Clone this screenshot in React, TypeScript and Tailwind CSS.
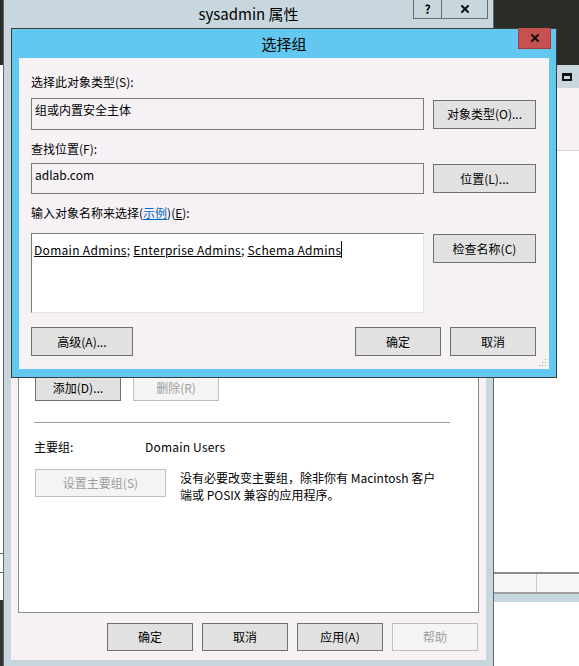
import React from "react";

const FONT = "font-['Noto_Sans_CJK_SC','Noto_Sans',sans-serif]";

function Btn({
  children,
  className = "",
  disabled = false,
}: {
  children: React.ReactNode;
  className?: string;
  disabled?: boolean;
}) {
  return (
    <button
      className={`flex shrink-0 items-center justify-center border text-[12px] leading-[16px] ${
        disabled ? "border-[#bfbfbf] bg-[#f4f4f4] text-[#9d9d9d]" : "border-[#707070] bg-[#e1e1e1] text-black"
      } ${className}`}
    >
      {children}
    </button>
  );
}

function XGlyph({ size = 8 }: { size?: number }) {
  return (
    <svg width={size} height={size} viewBox="0 0 8 8">
      <path d="M1 1 L7 7 M7 1 L1 7" stroke="#111" strokeWidth="2" strokeLinecap="square" />
    </svg>
  );
}

// ── Window behind, right side ──
function RightWindow() {
  return (
    <div className="absolute left-[494px] top-[65px] flex h-[537px] w-[85px] flex-col">
      <div className="flex h-[23px] items-center bg-[#c8d7de] pl-[68px]">
        <div className="h-[8px] w-[10px] border-2 border-t-[3px] border-[#111]" />
      </div>
      <div className="h-[62px] bg-[#f5f1f5]" />
      <div className="flex-1 border-t border-[#d6d6d6] bg-white" />
      <div className="flex h-[22px] border-y-2 border-[#8a8a8a] border-b-[#a0a0a0] bg-[#f6f6f6]">
        <div className="w-[43px] border-r border-[#c9c9c9]" />
      </div>
      <div className="h-[8px] bg-[#c8d7de]" />
    </div>
  );
}

// ── sysadmin 属性 ──
function PropertiesWindow() {
  return (
    <div className="absolute left-[3px] top-0 flex h-[666px] w-[491px] flex-col border-x border-[#5d6a70] bg-[#c8d7de]">
      {/* title bar */}
      <div className="flex h-[28px] shrink-0 items-start">
        <div className="flex h-full flex-1 items-center justify-center pl-[80px] text-[15px] leading-[20px] text-black">
          sysadmin 属性
        </div>
        <div className="mr-[5px] flex h-[19px] border border-t-0 border-[#6c6c6c]">
          <div className="flex w-[28px] items-center justify-center border-r border-[#6c6c6c] text-[12px] font-bold leading-none">
            ?
          </div>
          <div className="flex w-[45px] items-center justify-center">
            <XGlyph />
          </div>
        </div>
      </div>

      {/* body */}
      <div className="mx-[7px] mb-[6px] flex flex-1 flex-col bg-[#f5f1f5] px-[7px] pt-[22px] pb-[9px]">
        <div className="flex flex-1 flex-col border border-[#8a8a8a] bg-white">
          <div className="h-[323px]" />
          <div className="flex gap-[12px] pl-[16px]">
            <Btn className="h-[27px] w-[86px]">添加(D)...</Btn>
            <Btn className="h-[27px] w-[86px]" disabled>
              删除(R)
            </Btn>
          </div>
          <div className="ml-[15px] mt-[21px] h-px w-[416px] bg-[#a0a0a0]" />
          <div className="ml-[15px] mt-[16px] flex leading-[16px]">
            <div className="w-[111px]">主要组:</div>
            <div className="tracking-[0.2px]">Domain Users</div>
          </div>
          <div className="ml-[16px] mt-[14px] flex gap-[14px]">
            <Btn className="h-[28px] w-[131px]" disabled>
              设置主要组(S)
            </Btn>
            <div className="leading-[17px]">
              没有必要改变主要组，除非你有 Macintosh 客户
              <br />
              端或 POSIX 兼容的应用程序。
            </div>
          </div>
        </div>
        <div className="mt-[10px] flex justify-end gap-[9px] pr-px">
          <Btn className="h-[28px] w-[86px]">确定</Btn>
          <Btn className="h-[28px] w-[86px]">取消</Btn>
          <Btn className="h-[28px] w-[86px]">应用(A)</Btn>
          <Btn className="h-[28px] w-[86px]" disabled>
            帮助
          </Btn>
        </div>
      </div>
    </div>
  );
}

// ── 选择组 dialog ──
function SelectGroupDialog() {
  return (
    <div className="absolute left-[11px] top-[28px] flex h-[350px] w-[546px] flex-col border border-[#3d3d3d] bg-[#63c8ef]">
      <div className="flex h-[29px] shrink-0 items-start">
        <div className="flex h-full flex-1 items-center justify-center pl-[38px] text-[15px] leading-[20px] text-black">
          选择组
        </div>
        <div className="-mt-px mr-[5px] flex h-[21px] w-[33px] items-center justify-center border border-t-0 border-[#a23c3c] bg-[#c75050]">
          <XGlyph />
        </div>
      </div>

      <div className="relative mx-[7px] mb-[8px] flex flex-1 flex-col bg-[#f5f1f5] pl-[12px] pr-[13px] pt-[16px] text-[12px] leading-[16px]">
        <div>选择此对象类型(S):</div>
        <div className="mt-[8px] flex items-center gap-[9px]">
          <div className="h-[32px] flex-1 border border-[#7a7a7a] pl-[3px] pt-[3px]">组或内置安全主体</div>
          <Btn className="h-[29px] w-[103px]">对象类型(O)...</Btn>
        </div>

        <div className="mt-[11px]">查找位置(F):</div>
        <div className="mt-[6px] flex items-center gap-[9px]">
          <div className="h-[31px] flex-1 border border-[#7a7a7a] pl-[3px] pt-[3px]">adlab.com</div>
          <Btn className="h-[29px] w-[103px]">位置(L)...</Btn>
        </div>

        <div className="mt-[11px]">
          输入对象名称来选择(<span className="text-[#0066cc] underline">示例</span>)(<span className="underline">E</span>):
        </div>
        <div className="mt-[12px] flex items-start gap-[9px]">
          <div className="h-[80px] flex-1 border border-[#7a7a7a] border-b-[#e3e3e3] border-r-[#e3e3e3] bg-white pl-[2px] pt-[8px] tracking-[0.3px]">
            <span className="underline">Domain Admins</span>;{" "}
            <span className="underline">Enterprise Admins</span>;{" "}
            <span className="border-r border-black underline">Schema Admins</span>
          </div>
          <Btn className="mt-px h-[29px] w-[103px]">检查名称(C)</Btn>
        </div>

        <div className="mt-[14px] flex gap-[9px]">
          <Btn className="h-[29px] w-[102px]">高级(A)...</Btn>
          <div className="flex-1" />
          <Btn className="h-[29px] w-[86px]">确定</Btn>
          <Btn className="h-[29px] w-[86px]">取消</Btn>
        </div>

        {/* resize grip */}
        <svg className="absolute bottom-[2px] right-[2px]" width="8" height="8" viewBox="0 0 8 8">
          <rect x="6" y="0" width="1" height="1" fill="#a0a0a0" />
          <rect x="3" y="3" width="1" height="1" fill="#a0a0a0" />
          <rect x="6" y="3" width="1" height="1" fill="#a0a0a0" />
          <rect x="0" y="6" width="1" height="1" fill="#a0a0a0" />
          <rect x="3" y="6" width="1" height="1" fill="#a0a0a0" />
          <rect x="6" y="6" width="1" height="1" fill="#a0a0a0" />
        </svg>
      </div>
    </div>
  );
}

export default function App() {
  return (
    <div className={`relative h-[666px] w-[579px] overflow-hidden bg-white text-[12px] text-black ${FONT}`}>
      {/* desktop */}
      <div className="absolute left-0 top-0 h-[65px] w-full bg-[#2b2c28]" />
      <div className="absolute bottom-0 left-0 h-[66px] w-[3px] bg-[#333]" />
      <div className="absolute left-0 top-[553px] h-px w-[3px] bg-[#666]" />
      <div className="absolute left-0 top-[572px] h-px w-[3px] bg-[#666]" />

      <RightWindow />
      <PropertiesWindow />
      <SelectGroupDialog />
    </div>
  );
}
